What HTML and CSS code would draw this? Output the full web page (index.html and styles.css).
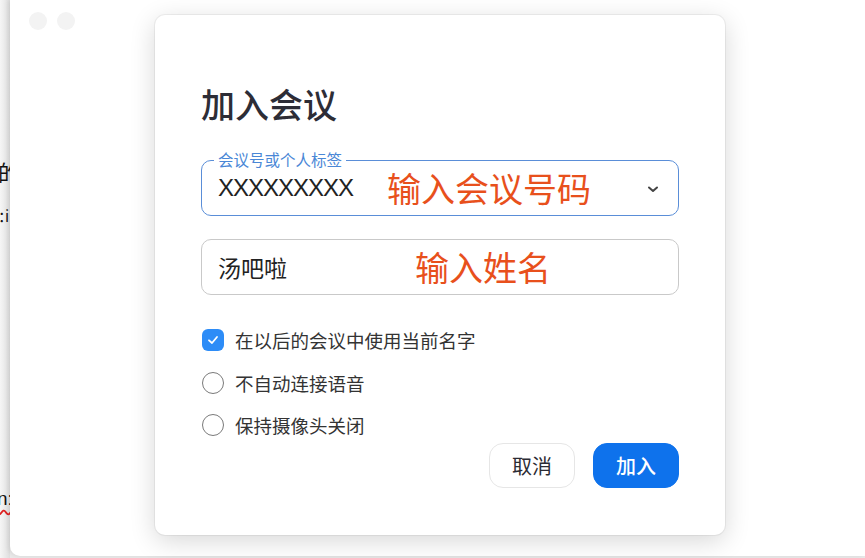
FILE: index.html
```html
<!DOCTYPE html>
<html lang="zh-CN">
<head>
  <meta charset="UTF-8">
  <title>加入会议</title>
  <link rel="stylesheet" href="styles.css">
</head>
<body>

  <div class="desk">

    <!-- page behind the app window, only a sliver shows -->
    <div class="behind">
      <p class="frag frag-1">的</p>
      <p class="frag frag-2">：i</p>
      <p class="frag frag-3"><span class="typo">n:</span></p>
    </div>

    <!-- app window -->
    <div class="window">
      <div class="lights"><span></span><span></span></div>

      <!-- Join dialog -->
      <div class="dialog">
        <h1>加入会议</h1>

        <div class="field active">
          <span class="field-label">会议号或个人标签</span>
          <span class="value latin">XXXXXXXXX</span>
          <span class="hint hint-id">输入会议号码</span>
          <svg class="chevron" width="14" height="10" viewBox="0 0 14 10">
            <path d="M3 3.5 L7 7 L11 3.5" fill="none" stroke="#444" stroke-width="2" stroke-linecap="round" stroke-linejoin="round"/>
          </svg>
        </div>

        <div class="field">
          <span class="value">汤吧啦</span>
          <span class="hint hint-name">输入姓名</span>
        </div>

        <ul class="options">
          <li>
            <span class="box checked">
              <svg width="14" height="14" viewBox="0 0 14 14">
                <path d="M3 7.3 L6 10 L11 4" fill="none" stroke="#fff" stroke-width="1.8" stroke-linecap="round" stroke-linejoin="round"/>
              </svg>
            </span>
            在以后的会议中使用当前名字
          </li>
          <li><span class="box"></span>不自动连接语音</li>
          <li><span class="box"></span>保持摄像头关闭</li>
        </ul>

        <div class="actions">
          <button class="btn">取消</button>
          <button class="btn primary">加入</button>
        </div>
      </div>
    </div>

  </div>

</body>
</html>
```

FILE: styles.css
```css
body {
  margin: 0;
  background: #e9e9e9;
  font-family: "Noto Sans CJK SC", "Noto Sans", sans-serif;
  color: #2b2b33;
}

.desk {
  display: flex;
  height: 558px;
  overflow: hidden;
}

/* sliver of the page behind */
.behind {
  width: 10px;
  flex-shrink: 0;
  overflow: hidden;
  background: linear-gradient(to right, #f6f6f6, #dedede);
  color: #111;
  white-space: nowrap;
}
.frag {
  margin: 0;
  line-height: 1;
}
.frag-1 {
  margin-top: 160px;
  margin-left: -2px;
  font-size: 22px;
}
.frag-2 {
  margin-top: 26px;
  margin-left: -2px;
  font-size: 15px;
  letter-spacing: -8px;
}
.frag-3 {
  margin-top: 266px;
  margin-left: -3px;
  font-family: "Liberation Sans", sans-serif;
  font-size: 19px;
}
.typo {
  text-decoration: underline wavy #d22;
  text-underline-offset: 4px;
}

/* app window */
.window {
  flex: 1;
  display: flex;
  align-items: flex-start;
  height: 556px;
  background: #fff;
  border-bottom-left-radius: 10px;
  box-shadow: -2px 0 4px rgba(0,0,0,0.08);
  padding: 12px 0 0 19px;
  box-sizing: border-box;
}
.lights {
  display: flex;
  gap: 10px;
}
.lights span {
  width: 18px;
  height: 18px;
  border-radius: 50%;
  background: #f3f3f3;
}

/* dialog */
.dialog {
  width: 570px;
  height: 520px;
  box-sizing: border-box;
  margin: 3px 0 0 80px;
  padding: 67px 46px 0 46px;
  background: #fff;
  border-radius: 10px;
  box-shadow: 0 6px 26px rgba(0,0,0,0.16), 0 0 0 1px rgba(0,0,0,0.05);
}

h1 {
  margin: 0 0 34px 0;
  font-size: 34px;
  font-weight: 500;
  line-height: 44px;
  color: #2d2d36;
}

.field {
  position: relative;
  display: flex;
  align-items: center;
  height: 56px;
  box-sizing: border-box;
  padding: 0 18px 0 16px;
  border: 1.5px solid #c9c9c9;
  border-radius: 10px;
  margin-bottom: 23px;
}
.field.active {
  border-color: #5a8ed8;
}
.field-label {
  position: absolute;
  top: -11px;
  left: 12px;
  padding: 0 4px;
  background: #fff;
  color: #4a87d6;
  font-size: 15.5px;
  line-height: 18px;
}
.value {
  font-size: 23px;
  color: #222;
}
.latin {
  font-family: "Liberation Sans", Arial, sans-serif;
  font-size: 24px;
  letter-spacing: -1px;
}
.hint {
  color: #e8501c;
  font-size: 34px;
  line-height: 40px;
}
.hint-id {
  margin-left: 34px;
}
.hint-name {
  margin-left: 128px;
}
.chevron {
  margin-left: auto;
  margin-top: 2px;
}

.options {
  list-style: none;
  margin: 24px 0 0 0;
  padding: 0;
}
.options li {
  display: flex;
  align-items: center;
  gap: 11px;
  height: 42.5px;
  font-size: 18.5px;
  color: #333;
  padding-left: 1px;
}
.box {
  width: 22px;
  height: 22px;
  flex-shrink: 0;
  box-sizing: border-box;
  border: 1.5px solid #7a7a7a;
  border-radius: 50%;
  display: flex;
  align-items: center;
  justify-content: center;
}
.box.checked {
  border: none;
  border-radius: 6px;
  background: #2d8cf7;
}

.actions {
  display: flex;
  justify-content: flex-end;
  gap: 18px;
  margin-top: -4px;
}
.btn {
  width: 86px;
  height: 45px;
  border: 1.5px solid #e6e6e6;
  border-radius: 14px;
  background: #fff;
  font-family: "Noto Sans CJK SC", sans-serif;
  font-size: 20px;
  color: #2b2b33;
  cursor: pointer;
}
.btn.primary {
  background: #0e72ec;
  border-color: #0e72ec;
  color: #fff;
  font-weight: 500;
}
```
